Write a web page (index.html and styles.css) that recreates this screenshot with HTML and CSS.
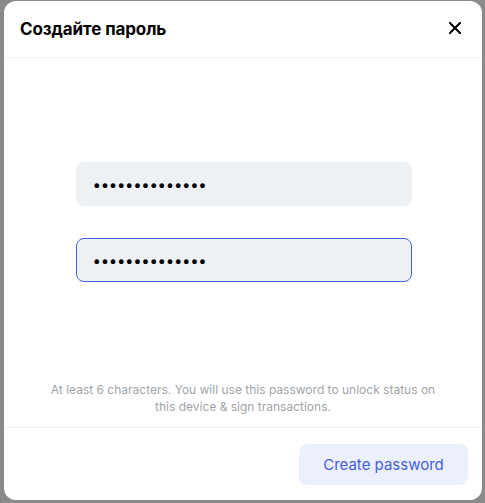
FILE: index.html
```html
<!DOCTYPE html>
<html lang="ru">
<head>
<meta charset="utf-8">
<title>Создайте пароль</title>
<link rel="stylesheet" href="styles.css">
</head>
<body>
<div class="modal">
  <header class="modal-header">
    <h1 class="modal-title">Создайте пароль</h1>
    <button class="close-btn" aria-label="Close">
      <svg width="12" height="12" viewBox="0 0 12 12"><path d="M1 1L11 11M11 1L1 11" stroke="#000" stroke-width="2" stroke-linecap="square" fill="none"/></svg>
    </button>
  </header>
  <main class="modal-body">
    <div class="fields">
      <input class="field" type="password" value="abcdefghijklmn">
      <input class="field field-focus" type="password" value="abcdefghijklmn">
    </div>
    <p class="hint">At least 6 characters. You will use this password to unlock status on this device &amp; sign transactions.</p>
  </main>
  <footer class="modal-footer">
    <button class="primary-btn">Create password</button>
  </footer>
</div>
</body>
</html>
```
FILE: styles.css
```css
html, body {
  margin: 0;
  height: 100%;
}
body {
  background: #8a8a8a;
  padding: 1px 3px 3px 4px;
  box-sizing: border-box;
  font-family: Inter, "Noto Sans", sans-serif;
}
.modal {
  background: #fff;
  border-radius: 12px;
  height: 100%;
  display: flex;
  flex-direction: column;
  overflow: hidden;
}
.modal-header {
  height: 56px;
  border-bottom: 1px solid #eef0f2;
  display: flex;
  align-items: center;
  justify-content: space-between;
  padding: 0 16px 0 16px;
  flex-shrink: 0;
}
.modal-title {
  margin: 0;
  font-size: 17px;
  font-weight: 700;
  color: #000;
  letter-spacing: -0.1px;
}
.close-btn {
  border: 0;
  background: none;
  padding: 0;
  width: 20px;
  height: 20px;
  display: flex;
  align-items: center;
  justify-content: center;
  margin-right: 1px;
  margin-top: -2px;
}
.modal-body {
  flex: 1;
  display: flex;
  flex-direction: column;
  align-items: center;
  padding: 104px 0 12px;
}
.fields {
  display: flex;
  flex-direction: column;
  gap: 32px;
  margin-left: 1px;
}
.field {
  width: 336px;
  height: 44px;
  box-sizing: border-box;
  border: 1px solid #eef1f4;
  border-radius: 8px;
  background: #eef1f4;
  padding: 0 16px;
  font-family: Inter, sans-serif;
  font-size: 15px;
  letter-spacing: -0.3px;
  color: #000;
  outline: none;
}
.field-focus {
  border-color: #4360df;
}
.hint {
  margin: auto 0 0;
  width: 400px;
  text-align: center;
  font-size: 12px;
  line-height: 17px;
  color: #a1a5aa;
}
.modal-footer {
  border-top: 1px solid #eef0f2;
  display: flex;
  justify-content: flex-end;
  padding: 16px 14px 15px;
  flex-shrink: 0;
}
.primary-btn {
  width: 169px;
  height: 41px;
  border: 0;
  border-radius: 8px;
  background: #eceffc;
  color: #4360df;
  font-family: Inter, sans-serif;
  font-size: 15px;
}
```
